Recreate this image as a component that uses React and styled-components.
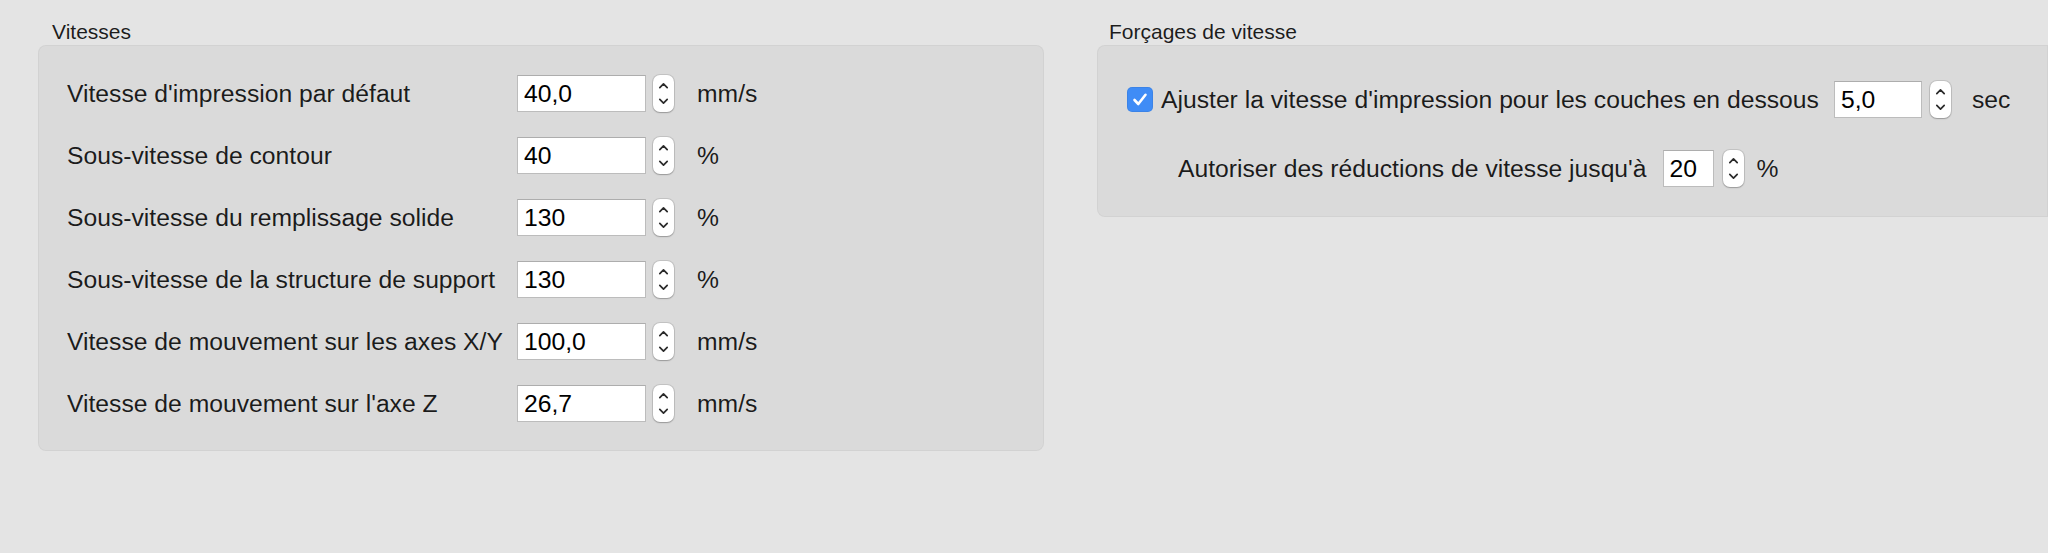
import React from 'react';
import styled, { createGlobalStyle } from 'styled-components';

const GlobalStyle = createGlobalStyle`
  html, body {
    margin: 0;
    padding: 0;
    background: #e4e4e4;
    overflow: hidden;
  }
  body {
    font-family: "Liberation Sans", Arial, Helvetica, sans-serif;
    color: rgba(0, 0, 0, 0.88);
  }
`;

const Page = styled.div`
  display: flex;
  gap: 53px;
  padding: 20px 0 0 38px;
  box-sizing: border-box;
  width: 100vw;
  overflow: hidden;
`;

const Group = styled.section`
  width: ${(p) => (p.fill ? 'auto' : '1006px')};
  flex: ${(p) => (p.fill ? '1 1 0' : '0 0 auto')};
  min-width: 0;
`;

const GroupTitle = styled.div`
  font-size: 21px;
  line-height: 24px;
  margin: 0 0 1px ${(p) => p.indent || 14}px;
`;

const Box = styled.div`
  background: #dadada;
  border-radius: ${(p) => (p.open ? '8px 0 0 8px' : '8px')};
  box-shadow: inset 0 0 0 1px rgba(0, 0, 0, 0.035);
  padding: ${(p) => p.pad};
  display: flex;
  flex-direction: column;
  gap: ${(p) => p.gap}px;
`;

const Row = styled.div`
  display: flex;
  align-items: center;
  height: 37px;
  padding-left: ${(p) => p.indent || 0}px;
`;

const Label = styled.span`
  font-size: 24.7px;
  line-height: 30px;
  white-space: nowrap;
  width: ${(p) => (p.width ? `${p.width}px` : 'auto')};
  flex-shrink: 0;
`;

const Field = styled.input`
  box-sizing: border-box;
  width: ${(p) => p.w}px;
  height: 37px;
  margin: 0 0 0 ${(p) => p.gap || 0}px;
  padding: 0 6px;
  border: 1px solid #bcbcbc;
  border-top-color: #adadad;
  background: #fff;
  font-family: inherit;
  font-size: 24.7px;
  color: #000;
  outline: none;
  border-radius: 0;
  flex-shrink: 0;
`;

const StepperWrap = styled.div`
  width: 21px;
  height: 37px;
  margin-left: ${(p) => p.gap}px;
  background: #fff;
  border-radius: 7px;
  box-shadow: 0 0 0 1px rgba(0, 0, 0, 0.1), 0 1px 1.5px rgba(0, 0, 0, 0.22);
  flex-shrink: 0;

  svg {
    display: block;
  }
`;

const Unit = styled.span`
  font-size: 24.7px;
  margin-left: ${(p) => p.gap}px;
  white-space: nowrap;
`;

const Check = styled.div`
  width: 26px;
  height: 25px;
  border-radius: 5px;
  background: #3f8cf6;
  box-shadow: inset 0 0 0 1px rgba(0, 0, 0, 0.06);
  margin-right: 8px;
  flex-shrink: 0;

  svg {
    display: block;
  }
`;

const Stepper = ({ gap = 7 }) => (
  <StepperWrap gap={gap}>
    <svg width="21" height="37" viewBox="0 0 21 37">
      <path d="M6.8 12.6 L10.5 8.9 L14.2 12.6" fill="none" stroke="#2a2a2a" strokeWidth="1.7" strokeLinecap="round" strokeLinejoin="round" />
      <path d="M6.8 24.4 L10.5 28.1 L14.2 24.4" fill="none" stroke="#2a2a2a" strokeWidth="1.7" strokeLinecap="round" strokeLinejoin="round" />
    </svg>
  </StepperWrap>
);

const speeds = [
  { label: "Vitesse d'impression par défaut", value: '40,0', unit: 'mm/s' },
  { label: 'Sous-vitesse de contour', value: '40', unit: '%' },
  { label: 'Sous-vitesse du remplissage solide', value: '130', unit: '%' },
  { label: 'Sous-vitesse de la structure de support', value: '130', unit: '%' },
  { label: 'Vitesse de mouvement sur les axes X/Y', value: '100,0', unit: 'mm/s' },
  { label: "Vitesse de mouvement sur l'axe Z", value: '26,7', unit: 'mm/s' },
];

const App = () => (
  <>
    <GlobalStyle />
    <Page>
      <Group>
        <GroupTitle>Vitesses</GroupTitle>
        <Box pad="30px 0 29px 29px" gap={25}>
          {speeds.map((s) => (
            <Row key={s.label}>
              <Label width={450}>{s.label}</Label>
              <Field w={129} value={s.value} readOnly />
              <Stepper gap={7} />
              <Unit gap={23}>{s.unit}</Unit>
            </Row>
          ))}
        </Box>
      </Group>

      <Group fill>
        <GroupTitle indent={12}>Forçages de vitesse</GroupTitle>
        <Box open pad="36px 0 30px 30px" gap={32}>
          <Row>
            <Check>
              <svg width="26" height="25" viewBox="0 0 26 25">
                <path d="M7.5 13 L11.3 17 L18.5 7.8" fill="none" stroke="#fff" strokeWidth="2.6" strokeLinecap="round" strokeLinejoin="round" />
              </svg>
            </Check>
            <Label>Ajuster la vitesse d'impression pour les couches en dessous</Label>
            <Field w={88} gap={15} value="5,0" readOnly />
            <Stepper gap={8} />
            <Unit gap={21}>sec</Unit>
          </Row>
          <Row indent={51}>
            <Label>Autoriser des réductions de vitesse jusqu'à</Label>
            <Field w={51} gap={16} value="20" readOnly />
            <Stepper gap={9} />
            <Unit gap={13}>%</Unit>
          </Row>
        </Box>
      </Group>
    </Page>
  </>
);

export default App;
